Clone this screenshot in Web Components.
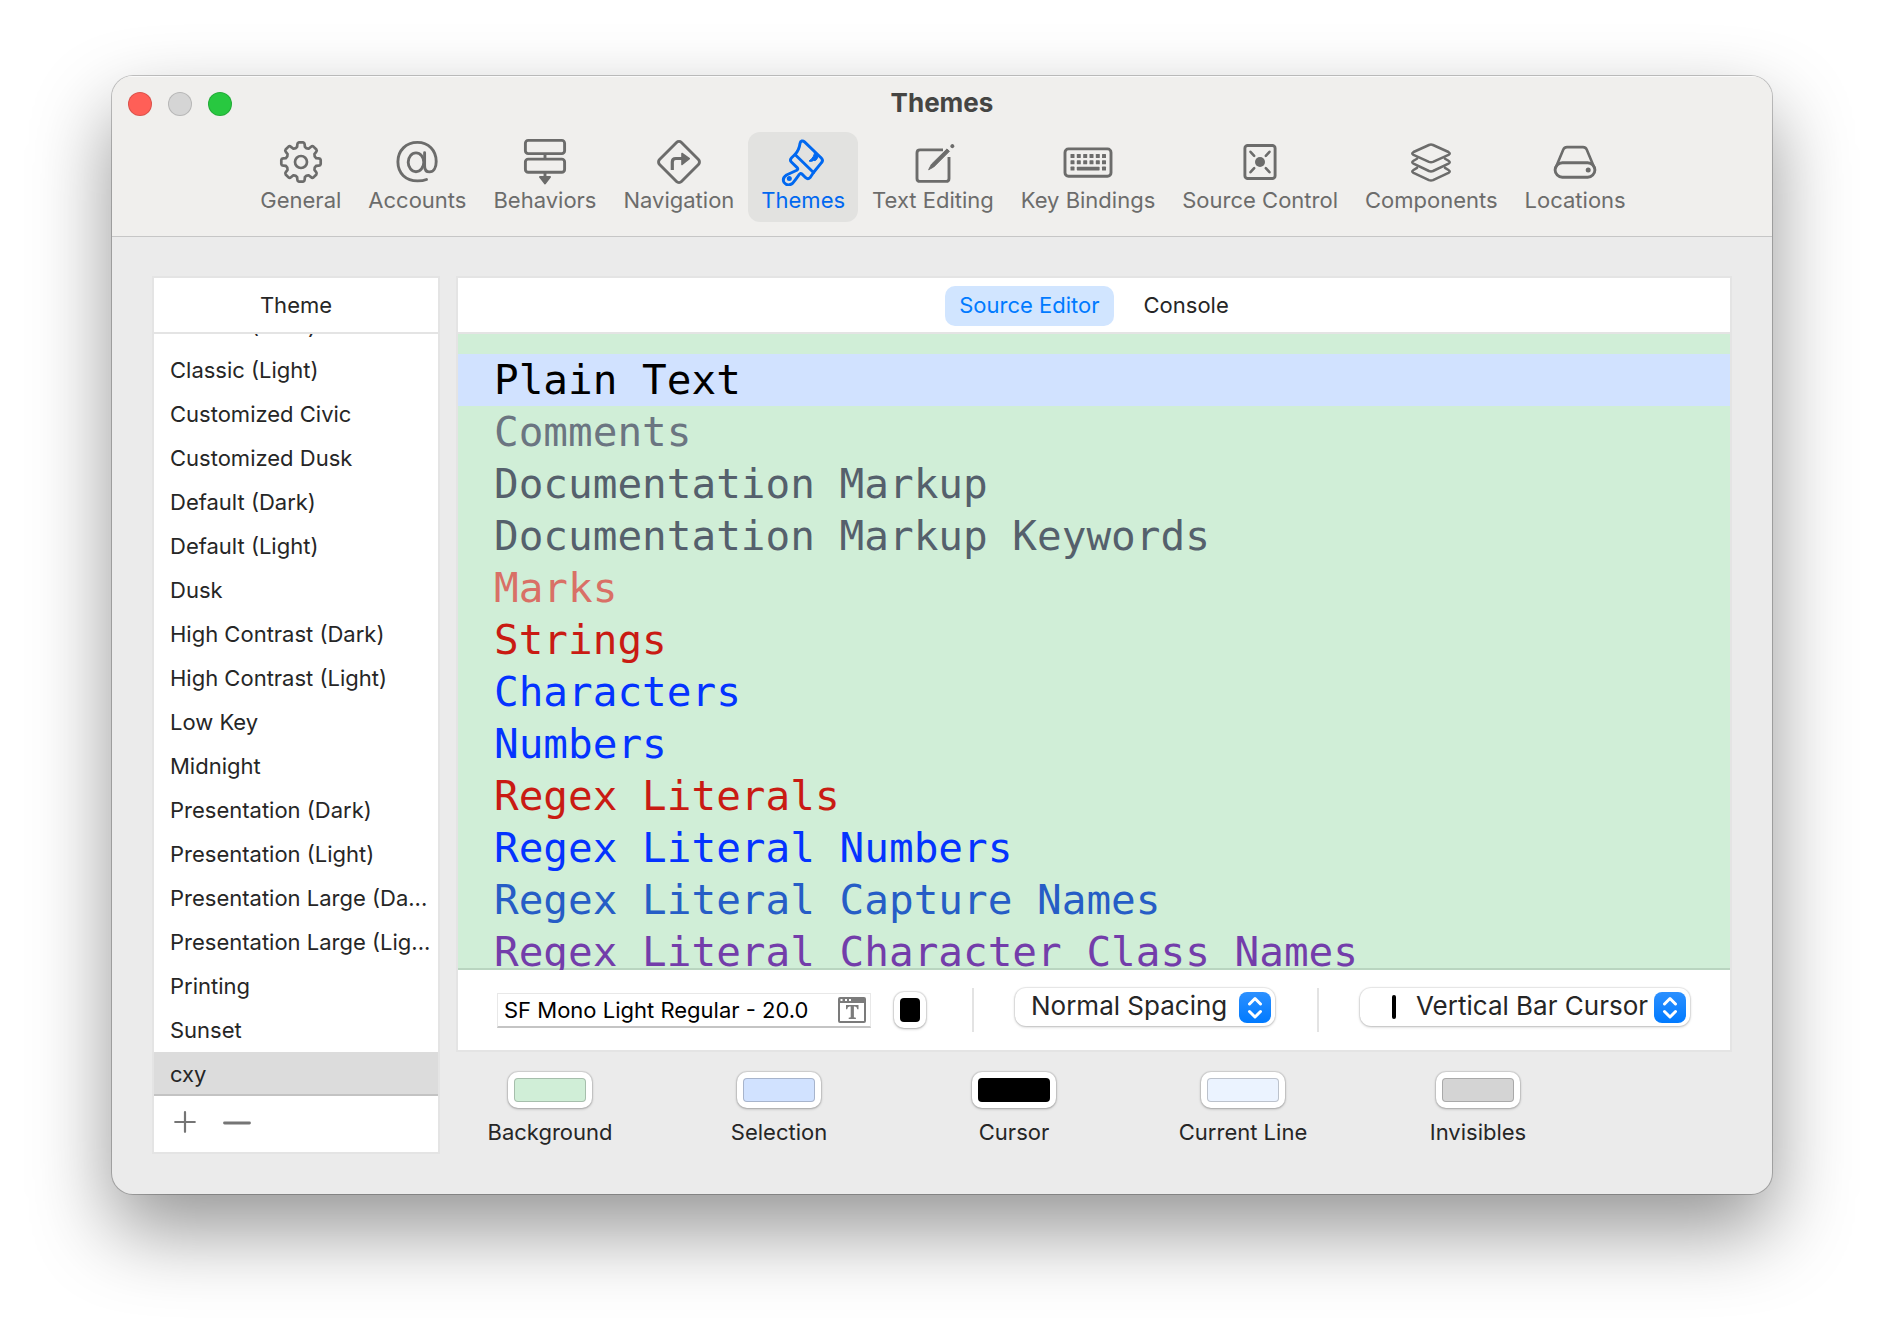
<!DOCTYPE html>
<html lang="en">
<head>
<meta charset="utf-8">
<title>Themes</title>
<style>
  * { box-sizing: border-box; }
  body {
    margin: 0;
    height: 100vh;
    display: flex;
    flex-direction: column;
    padding: 76px 112px 148px;
    background: #fff;
    color: #262626;
    font: 22px/26px Inter, "Liberation Sans", sans-serif;
  }
</style>
</head>
<body>
<settings-window heading="Themes">
  <toolbar-item slot="tools" icon="gear">General</toolbar-item>
  <toolbar-item slot="tools" icon="at">Accounts</toolbar-item>
  <toolbar-item slot="tools" icon="flow">Behaviors</toolbar-item>
  <toolbar-item slot="tools" icon="turn">Navigation</toolbar-item>
  <toolbar-item slot="tools" icon="brush" selected>Themes</toolbar-item>
  <toolbar-item slot="tools" icon="compose">Text Editing</toolbar-item>
  <toolbar-item slot="tools" icon="keyboard">Key Bindings</toolbar-item>
  <toolbar-item slot="tools" icon="vault">Source Control</toolbar-item>
  <toolbar-item slot="tools" icon="layers">Components</toolbar-item>
  <toolbar-item slot="tools" icon="drive">Locations</toolbar-item>
  <theme-list heading="Theme" selected="cxy"></theme-list>
  <theme-editor></theme-editor>
</settings-window>

<script>
function gearPath() {
  const point = (r, deg) => {
    const a = deg * Math.PI / 180;
    return (25 + r * Math.sin(a)).toFixed(2) + ' ' + (24 - r * Math.cos(a)).toFixed(2);
  };
  let d = '';
  for (let i = 0; i < 8; i++) {
    const c = i * 45;
    d += (i ? 'Q' + point(14.2, c - 22.5) + ' ' : 'M') + point(15.6, c - 14.5);
    d += 'L' + point(18.2, c - 11.5) + 'Q' + point(19.8, c - 10) + ' ' + point(19.8, c - 6);
    d += 'L' + point(19.8, c + 6) + 'Q' + point(19.8, c + 10) + ' ' + point(18.2, c + 11.5);
    d += 'L' + point(15.6, c + 14.5);
  }
  return d + 'Q' + point(14.2, -22.5) + ' ' + point(15.6, -14.5) + 'Z';
}

const keys = (xs, y) => xs.map(x => `<rect x="${x}" y="${y}" width="4" height="4" rx=".6" fill="currentColor" stroke="none"/>`).join('');

const ICONS = {
  gear: `<path stroke-width="2.7" d="${gearPath()}"/><circle cx="25" cy="24" r="6" stroke-width="2.7"/>`,
  at: `<ellipse cx="24" cy="24.3" rx="7.8" ry="9.4"/><path d="M32.6 14.8V28c0 4.2 2.2 5.9 5 5.9 4 0 6.6-4.2 6.6-10.4C44.200 12.400 36.500 4.400 25.500 4.400 14 4.400 5.900 12.500 5.900 23.800c0 11.600 8 19.100 19.600 19.100 3.500 0 6.500-.4 9-1.400"/>`,
  flow: `<rect x="5.400" y="2.400" width="39.200" height="13.200" rx="2.800"/><rect x="5.400" y="21.100" width="39.200" height="13.200" rx="2.800"/><path stroke-linecap="butt" d="M25 16v5M25 35v5"/><path d="M20 39h10l-5 6.500z" fill="currentColor" stroke-width="2"/>`,
  turn: `<rect x="9.500" y="8.500" width="31" height="31" rx="3.500" transform="rotate(45 25 24)"/><path stroke-linecap="butt" stroke-width="3.200" d="M18.300 32V24q0-3.500 3.500-3.500H28"/><path d="M28 15.500l7.300 5.100L28 26.500z" fill="currentColor" stroke-width="1.600"/>`,
  brush: `<path d="M17 16.500C20.200 13 21.500 9.500 22 5.500 22.400 2.600 24.800 2.300 26.500 3.900L43.300 20q2.300 2.300.2 4.700L35.500 34.500z"/><path d="M17 16.500l-3.400 3.200q-2.300 2.300 0 4.600l5.800 5.600q1 1.300-.6 2.400L8.500 37q-4.700 3.300-2.400 7.500 3.300 4.400 8.300 1Q16 44 21.500 36.200q1-1.500 2.300-.3l3.900 3.800q2.300 2 4.500-.2l3.300-5"/><path d="M36.500 13.500q.6 5-5.500 9.600 2.600.8 4.500-.6 3.500 1 4.500-4.500z" fill="currentColor" stroke-width="1"/><circle cx="11.300" cy="40.600" r="2.500" fill="currentColor" stroke="none"/>`,
  compose: `<path stroke-linecap="butt" d="M35 11.900H12q-3 0-3 3v25.500q0 3 3 3h26q3 0 3-3V19"/><path d="M20.800 31.400l2.700-5.200 15.500-15.300 2.400 2.400L26 28.700z" fill="currentColor" stroke-width="1"/><path stroke-width="4" d="M44.300 8.200l.1-.1"/>`,
  keyboard: `<rect x="2" y="10.900" width="46" height="27.400" rx="3.500"/>${keys([7.500, 13.800, 20.200, 26.500, 32.800, 39], 16)}${keys([7.500, 13.800, 20.200, 26.500, 32.800, 39], 22.300)}${keys([7.500, 39], 28.600)}<rect x="13.800" y="28.800" width="22.800" height="3.600" rx=".6" fill="currentColor" stroke="none"/>`,
  vault: `<rect x="9.900" y="7.500" width="30.200" height="33" rx="2.800"/><circle cx="25" cy="24" r="5" fill="currentColor" stroke="none"/><path stroke-width="2.600" d="M15.500 13.800l3.700 4M34.500 13.800l-3.700 4M15.500 34.200l3.700-4M34.500 34.200l-3.700-4"/>`,
  layers: `<path stroke-width="2.500" d="M23 7q2-.8 4 0l15.500 7q2.500 1.400 0 2.900L27 23.800q-2 .8-4 0L7.500 16.900q-2.500-1.500 0-2.900zM11 20.700l-3.500 2.100q-2.500 1.500 0 2.900L23 33q2 .8 4 0l15.500-7.300q2.500-1.400 0-2.900L39 20.700M11 29.900L7.500 32q-2.500 1.500 0 2.900L23 42.200q2 .8 4 0L42.500 34.900q2.500-1.400 0-2.900L39 29.900"/>`,
  drive: `<rect x="5.100" y="24.800" width="39.800" height="14.400" rx="7.200"/><path stroke-width="2.600" d="M5.800 29.500L13.300 11.500q1.100-2.400 3.700-2.400h16q2.600 0 3.700 2.400l7.500 18"/><circle cx="38.200" cy="32" r="2.500" fill="currentColor" stroke="none"/>`
};

class BaseElement extends HTMLElement {
  connectedCallback() {
    if (this.shadowRoot) return;
    this.attachShadow({ mode: 'open' }).innerHTML =
      `<style>* { box-sizing: border-box; } ${this.styles()}</style>${this.markup()}`;
  }
}

class SettingsWindow extends BaseElement {
  styles() { return `
    :host {
      flex: 1; min-height: 0; display: flex; flex-direction: column;
      border-radius: 21px; background: #ebebeb; overflow: hidden;
      box-shadow: 0 0 0 1px rgba(0,0,0,.22), 0 36px 80px rgba(0,0,0,.42);
    }
    header { background: #f0efed; border-bottom: 1px solid #c6c6c6; padding-bottom: 14px; box-shadow: inset 0 1px #fafafa; }
    .title { display: grid; grid-template-columns: 1fr auto 1fr; align-items: center; height: 56px; padding: 0 16px; }
    h1 { margin: 0; padding-bottom: 2px; font-size: 26px; line-height: 30px; font-weight: 700; color: #454543; }
    .lights { display: flex; gap: 16px; }
    .lights button { width: 24px; height: 24px; padding: 0; border-radius: 50%; border: 1px solid rgba(0,0,0,.14); }
    .close { background: #ff5f57; } .min { background: #d5d5d5; } .zoom { background: #28c840; }
    nav { display: flex; justify-content: center; gap: 1px; padding-left: 2px; }
    main { flex: 1; min-height: 0; display: flex; gap: 16px; padding: 39px 40px 40px; }
  `; }
  markup() { return `
    <header>
      <div class="title">
        <div class="lights">
          <button class="close" aria-label="Close"></button>
          <button class="min" aria-label="Minimize" disabled></button>
          <button class="zoom" aria-label="Zoom"></button>
        </div>
        <h1>${this.getAttribute('heading')}</h1>
      </div>
      <nav><slot name="tools"></slot></nav>
    </header>
    <main><slot></slot></main>`; }
}

class ToolbarItem extends BaseElement {
  styles() { return `
    :host { display: block; }
    button {
      display: flex; flex-direction: column; align-items: center; gap: 1px;
      height: 90px; padding: 6px 13px 0; border: 0; border-radius: 12px;
      background: none; color: #6c6c6b; font: inherit; white-space: nowrap;
    }
    :host([selected]) button { background: #e2e2e0; color: #0068f0; }
    svg { width: 50px; height: 48px; fill: none; stroke: currentColor; stroke-width: 2.9; stroke-linecap: round; stroke-linejoin: round; }
  `; }
  markup() { return `<button><svg viewBox="0 0 50 48" aria-hidden="true">${ICONS[this.getAttribute('icon')]}</svg><span><slot></slot></span></button>`; }
}

const THEMES = ['Classic (Dark)', 'Classic (Light)', 'Customized Civic', 'Customized Dusk', 'Default (Dark)',
  'Default (Light)', 'Dusk', 'High Contrast (Dark)', 'High Contrast (Light)', 'Low Key', 'Midnight',
  'Presentation (Dark)', 'Presentation (Light)', 'Presentation Large (Da...', 'Presentation Large (Lig...',
  'Printing', 'Sunset', 'cxy'];

class ThemeList extends BaseElement {
  styles() { return `
    :host { flex: 0 0 288px; display: flex; flex-direction: column; min-height: 0; background: #fff; border: 2px solid #e4e4e4; }
    h2 { margin: 0; font: inherit; text-align: center; line-height: 54px; border-bottom: 2px solid #e4e4e4; }
    ul { flex: 1; min-height: 0; margin: 0; padding: 0; list-style: none; overflow: hidden; display: flex; flex-direction: column; justify-content: flex-end; }
    li { flex: none; height: 44px; line-height: 44px; padding-left: 16px; white-space: nowrap; }
    .on { background: #dcdcdc; box-shadow: inset 0 -2px #c3c3c3; }
    footer { display: flex; align-items: center; gap: 27px; height: 56px; padding: 0 20px 4px; }
    footer button { display: flex; padding: 0; border: 0; background: none; color: #757575; }
    svg { height: 24px; fill: none; stroke: currentColor; stroke-linecap: round; }
  `; }
  markup() {
    const on = this.getAttribute('selected');
    return `<h2>${this.getAttribute('heading')}</h2>
    <ul>${THEMES.map(t => `<li${t === on ? ' class="on"' : ''}>${t}</li>`).join('')}</ul>
    <footer>
      <button aria-label="Add theme"><svg width="22" viewBox="0 0 22 24" stroke-width="2.2"><path d="M1.200 12h19.600M11 2.200v19.600"/></svg></button>
      <button aria-label="Remove theme"><svg width="28" viewBox="0 0 28 24" stroke-width="2.800"><path d="M1.500 13h25"/></svg></button>
    </footer>`;
  }
}

const SYNTAX = [['Plain Text', '#000000'], ['Comments', '#6b7581'], ['Documentation Markup', '#55606c'],
  ['Documentation Markup Keywords', '#55606c'], ['Marks', '#d97066'], ['Strings', '#c91b13'],
  ['Characters', '#0433ff'], ['Numbers', '#0433ff'], ['Regex Literals', '#c91b13'],
  ['Regex Literal Numbers', '#0433ff'], ['Regex Literal Capture Names', '#265dc6'],
  ['Regex Literal Character Class Names', '#733daa']];

class ThemeEditor extends BaseElement {
  styles() { return `
    :host { flex: 1; min-width: 0; min-height: 0; display: flex; flex-direction: column; }
    section { flex: 1; min-height: 0; display: flex; flex-direction: column; background: #fff; border: 2px solid #e4e4e4; }
    .tabs { flex: none; display: flex; justify-content: center; align-items: center; gap: 16px; height: 56px; padding-top: 2px; border-bottom: 2px solid #e4e4e4; }
    .tabs button { height: 40px; padding: 0 14px 2px; border: 0; border-radius: 10px; background: none; font: inherit; color: #262626; }
    .tabs [aria-selected="true"] { background: #d1e5ff; color: #007aff; }
    .code {
      flex: 1; min-height: 0; margin: 0; padding: 20px 0 0; overflow: hidden; list-style: none;
      background: #d0eed7; box-shadow: inset 0 -2px #b9d5c0;
      font: 41px/52px "DejaVu Sans Mono", monospace;
    }
    .code li { height: 52px; padding-left: 36px; white-space: pre; }
    .code li:first-child { background: #d1e2ff; }
    .bar { flex: none; display: flex; justify-content: space-between; align-items: center; height: 80px; padding: 0 40px 0 39px; }
    .font { display: flex; align-items: center; gap: 22px; padding-right: 4px; }
    .field { display: flex; align-items: center; width: 374px; height: 35px; padding: 0 4px 0 6px; border: 1px solid #e8e8e8; border-bottom: 2px solid #c4c4c4; }
    .field input { flex: 1; min-width: 0; padding: 0; border: 0; background: none; font: inherit; color: #000; outline: 0; }
    .field button { display: flex; padding: 0; border: 0; background: none; }
    hr { width: 2px; height: 44px; margin: 0; border: 0; background: #e3e3e3; }
    .wells { display: flex; gap: 111px; padding: 20px 32px 9px; }
    .pair { display: flex; gap: 105px; }
  `; }
  markup() { return `
    <section>
      <div class="tabs" role="tablist">
        <button role="tab" aria-selected="true">Source Editor</button>
        <button role="tab" aria-selected="false">Console</button>
      </div>
      <ul class="code">${SYNTAX.map(([t, c]) => `<li style="color:${c}">${t}</li>`).join('')}</ul>
      <div class="bar">
        <div class="font">
          <div class="field">
            <input aria-label="Font" value="SF Mono Light Regular - 20.0" readonly>
            <button aria-label="Choose font"><svg width="28" height="28" viewBox="0 0 28 28" fill="#7b7b7b">
              <path fill-rule="evenodd" d="M2 1h24q2 0 2 2v22q0 2-2 2H2q-2 0-2-2V3q0-2 2-2zM2 7v18h24V7zM2.500 3v2h2V3zM7 3v2h2V3zM11 3v2h2V3z"/>
              <path d="M8 9h12.500v4.200h-1.200q-.3-2.400-2.300-2.600h-1.100v10.600l2 .6V23h-7.200v-1.200l2-.6V10.600h-1.200q-2 .2-2.300 2.600H8z"/>
            </svg></button>
          </div>
          <color-well compact label="Text color" value="#000000"></color-well>
        </div>
        <hr>
        <pop-up-menu label="Line spacing" value="Normal Spacing" style="--width:260px"></pop-up-menu>
        <hr>
        <pop-up-menu label="Cursor type" value="Vertical Bar Cursor" cursor style="--width:330px"></pop-up-menu>
      </div>
    </section>
    <div class="wells">
      <div class="pair"><color-well label="Background" value="#d0eed7"></color-well><color-well label="Selection" value="#d1e2ff"></color-well></div>
      <div class="pair"><color-well label="Cursor" value="#000000"></color-well><color-well label="Current Line" value="#ebf3ff"></color-well></div>
      <color-well label="Invisibles" value="#d4d4d4"></color-well>
    </div>`; }
}

class ColorWell extends BaseElement {
  styles() { return `
    :host { display: flex; flex-direction: column; align-items: center; gap: 11px; width: 124px; }
    :host([compact]) { width: 33px; }
    input {
      appearance: none; -webkit-appearance: none; display: block; width: 84px; height: 36px; padding: 6px; border: 0;
      border-radius: 10px; background: #fff; box-shadow: 0 0 1px 1px rgba(0,0,0,.1), 0 1px 3px rgba(0,0,0,.25);
    }
    :host([compact]) input { width: 32px; }
    input::-webkit-color-swatch-wrapper { padding: 0; }
    input::-webkit-color-swatch { border: 1px solid rgba(0,0,0,.2); border-radius: 4px; }
    label { white-space: nowrap; }
  `; }
  markup() {
    const label = this.getAttribute('label'), value = this.getAttribute('value');
    return this.hasAttribute('compact')
      ? `<input type="color" aria-label="${label}" value="${value}">`
      : `<input type="color" id="well" value="${value}"><label for="well">${label}</label>`;
  }
}

class PopUpMenu extends BaseElement {
  styles() { return `
    :host { display: grid; align-items: center; width: var(--width); margin-bottom: 6px; }
    select, .mark, .arrows { grid-area: 1 / 1; }
    select {
      appearance: none; -webkit-appearance: none; width: 100%; height: 38px; padding: 0 38px 2px 16px;
      border: 0; border-radius: 11px; background: #fff; font: inherit; font-size: 26px; line-height: 34px; color: #262626;
      box-shadow: 0 0 1px 1px rgba(0,0,0,.08), 0 1px 3px rgba(0,0,0,.22);
    }
    :host([cursor]) select { padding-left: 56px; }
    .mark { display: none; justify-self: start; width: 4px; height: 24px; margin-left: 32px; border-radius: 2px; background: #000; pointer-events: none; }
    :host([cursor]) .mark { display: block; }
    .arrows { justify-self: end; width: 32px; height: 31px; margin-right: 4px; border-radius: 8px; background: linear-gradient(#2c90ff, #007aff); pointer-events: none; }
  `; }
  markup() { return `
    <select aria-label="${this.getAttribute('label')}"><option>${this.getAttribute('value')}</option></select>
    <span class="mark"></span>
    <svg class="arrows" viewBox="0 0 32 31" fill="none" stroke="#fff" stroke-width="3" stroke-linecap="round" stroke-linejoin="round" aria-hidden="true"><path d="M10.500 12l5.500-5.500 5.500 5.500M10.500 19.500L16 25l5.500-5.500"/></svg>`; }
}

customElements.define('color-well', ColorWell);
customElements.define('pop-up-menu', PopUpMenu);
customElements.define('toolbar-item', ToolbarItem);
customElements.define('theme-list', ThemeList);
customElements.define('theme-editor', ThemeEditor);
customElements.define('settings-window', SettingsWindow);
</script>
</body>
</html>
